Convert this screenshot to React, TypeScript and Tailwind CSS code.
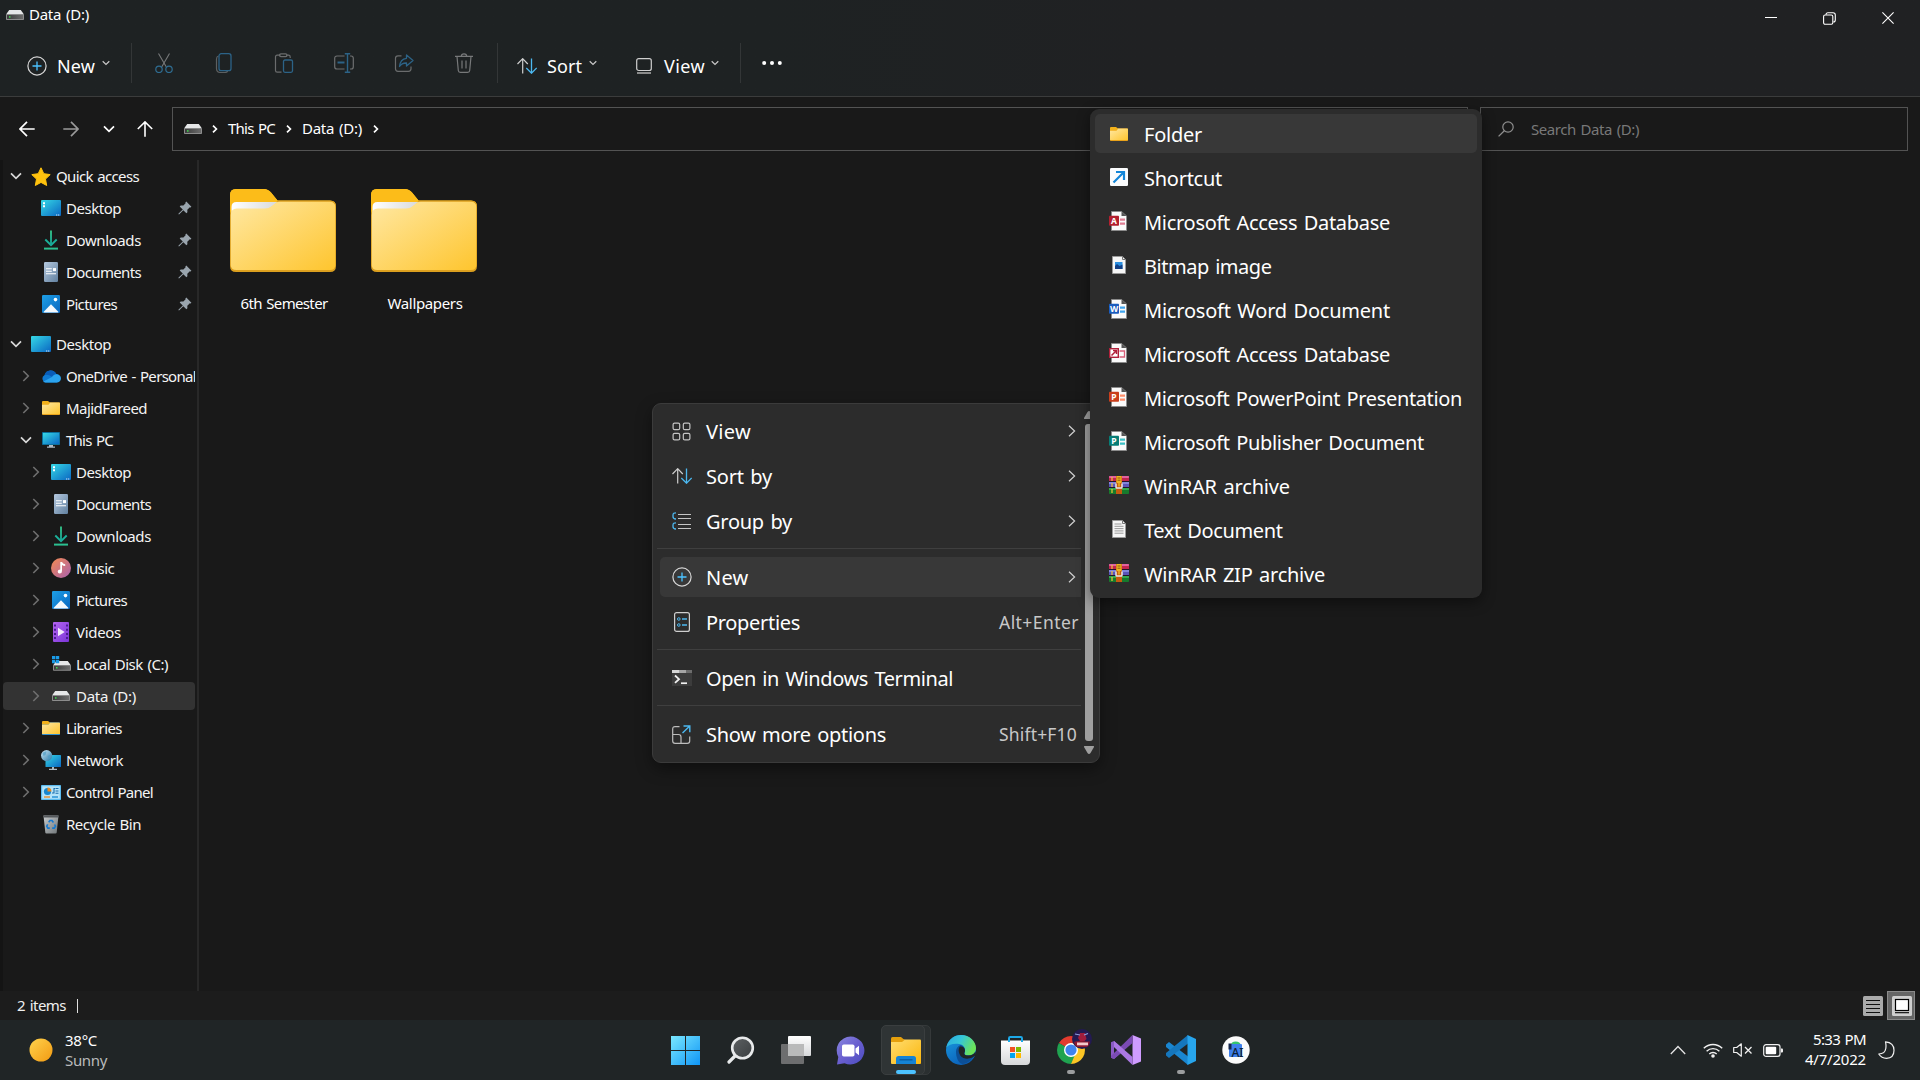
import { useLayoutEffect, useRef, useState, type ReactNode } from 'react';

/* Text whose tracking is tuned so that it spans the given width. */
function Label({ children, w, className = '' }: { children: string; w: number; className?: string }) {
  const ref = useRef<HTMLSpanElement>(null);
  const [track, setTrack] = useState(0);
  useLayoutEffect(() => {
    if (ref.current) {
      const natural = ref.current.getBoundingClientRect().width - track * children.length;
      setTrack((w - natural) / children.length);
    }
  }, [children, w]);
  return (
    <span ref={ref} className={`inline-block whitespace-pre [word-spacing:0.08em] ${className}`} style={{ letterSpacing: `${track}px` }}>
      {children}
    </span>
  );
}

type IconProps = { w?: number; h?: number; vb?: string; className?: string; children: ReactNode };
function Svg({ w = 20, h = 20, vb, className = '', children }: IconProps) {
  return (
    <svg width={w} height={h} viewBox={vb ?? `0 0 ${w} ${h}`} fill="none" className={`block shrink-0 ${className}`}>
      {children}
    </svg>
  );
}

function Gradients() {
  return (
    <svg width="0" height="0" className="absolute">
      <defs>
        <linearGradient id="desk" x1="0" y1="0" x2="1" y2="1"><stop offset="0" stopColor="#36d9e6" /><stop offset="1" stopColor="#0a66c2" /></linearGradient>
        <linearGradient id="pic" x1="0" y1="0" x2="1" y2="1"><stop offset="0" stopColor="#1ea0e6" /><stop offset="1" stopColor="#0866c0" /></linearGradient>
        <linearGradient id="doc" x1="0" y1="0" x2="1" y2="1"><stop offset="0" stopColor="#b4c8de" /><stop offset="1" stopColor="#61809f" /></linearGradient>
        <linearGradient id="dl" x1="0" y1="0" x2="0" y2="1"><stop offset="0" stopColor="#36c98a" /><stop offset="1" stopColor="#14a79c" /></linearGradient>
        <linearGradient id="music" x1="0" y1="0" x2="1" y2="1"><stop offset="0" stopColor="#f58b50" /><stop offset="1" stopColor="#a860b0" /></linearGradient>
        <linearGradient id="video" x1="0" y1="0" x2="1" y2="1"><stop offset="0" stopColor="#b565f0" /><stop offset="1" stopColor="#7a34d8" /></linearGradient>
        <linearGradient id="fold" x1="0" y1="0" x2="1" y2="1"><stop offset="0" stopColor="#ffe8a3" /><stop offset="1" stopColor="#fec52e" /></linearGradient>
        <linearGradient id="foldTask" x1="0" y1="0" x2="1" y2="1"><stop offset="0" stopColor="#ffdd70" /><stop offset="1" stopColor="#fbb60c" /></linearGradient>
        <linearGradient id="paper" x1="0" y1="0" x2="1" y2="0"><stop offset="0" stopColor="#ffffff" /><stop offset="1" stopColor="#d9dadb" /></linearGradient>
        <linearGradient id="drive" x1="0" y1="0" x2="1" y2="0"><stop offset="0" stopColor="#3c3c3c" /><stop offset="1" stopColor="#6c6c6c" /></linearGradient>
        <linearGradient id="win" gradientUnits="userSpaceOnUse" x1="0" y1="0" x2="29" y2="29"><stop offset="0" stopColor="#7ae8ff" /><stop offset="1" stopColor="#0f95f5" /></linearGradient>
        <linearGradient id="chat" x1="0" y1="0" x2="1" y2="1"><stop offset="0" stopColor="#8a88e0" /><stop offset="0.5" stopColor="#6a5fcf" /><stop offset="1" stopColor="#4a4cc0" /></linearGradient>
        <linearGradient id="edgeTop" x1="0" y1="0" x2="1" y2="0.4"><stop offset="0" stopColor="#2aa7e0" /><stop offset="0.5" stopColor="#35c6d8" /><stop offset="1" stopColor="#6be35a" /></linearGradient>
        <linearGradient id="edgeSide" x1="0" y1="0" x2="0.6" y2="1"><stop offset="0" stopColor="#1a9be0" /><stop offset="1" stopColor="#0a5fb8" /></linearGradient>
        <linearGradient id="globe" x1="0" y1="0" x2="1" y2="1"><stop offset="0" stopColor="#d4ecf7" /><stop offset="1" stopColor="#2577a8" /></linearGradient>
        <linearGradient id="sun" x1="0" y1="0" x2="1" y2="1"><stop offset="0" stopColor="#ffd34d" /><stop offset="1" stopColor="#f29a12" /></linearGradient>
        <linearGradient id="store" x1="0" y1="0" x2="0" y2="1"><stop offset="0" stopColor="#ffffff" /><stop offset="1" stopColor="#d6d8da" /></linearGradient>
        <linearGradient id="bin" x1="0" y1="0" x2="1" y2="1"><stop offset="0" stopColor="#c9ccce" /><stop offset="1" stopColor="#6f7578" /></linearGradient>
        <linearGradient id="lens" x1="0" y1="0" x2="1" y2="1"><stop offset="0" stopColor="#5d6163" /><stop offset="1" stopColor="#3a3e40" /></linearGradient>
      </defs>
    </svg>
  );
}

/* ---------- small icons ---------- */
const Drive = () => (
  <Svg w={18} h={10}>
    <path d="M3.2 0h11.6L18 4.5H0z" fill="#e6e7e8" />
    <rect y="4.3" width="18" height="5.7" rx="0.8" fill="#8d8d8d" />
    <rect x="1" y="5" width="16" height="4" fill="url(#drive)" />
    <rect x="3" y="6.2" width="1.5" height="1.5" fill="#3ddc4e" />
  </Svg>
);
const LocalDisk = () => (
  <Svg w={19} h={16}>
    <path d="M4.2 5h11.6L19 9.5H1z" fill="#e6e7e8" />
    <rect x="1" y="9" width="18" height="5.7" rx="0.8" fill="#8d8d8d" />
    <rect x="2" y="9.8" width="16" height="4" fill="url(#drive)" />
    <rect x="4" y="11" width="1.5" height="1.5" fill="#3ddc4e" />
    <path d="M0 0h3.300v3.300H0zM3.900 0h3.300v3.300H3.900zM0 3.900h3.300v3.300H0zM3.900 3.900h3.300v3.300H3.900z" fill="#1a9be8" />
  </Svg>
);
const Desk = () => (
  <Svg w={20} h={16}>
    <rect width="20" height="16" rx="1" fill="url(#desk)" />
    <path d="M2 2.200h2v2H2zM2 5.200h2v2H2z" fill="#fff" />
    <path d="M15 14.500h1.300v1H15zM17 14.500h1.300v1H17z" fill="#fff" opacity=".8" />
  </Svg>
);
const DeskPlain = () => (
  <Svg w={20} h={16}>
    <rect width="20" height="16" rx="1" fill="url(#desk)" />
    <path d="M15 14.500h1.300v1H15zM17 14.500h1.300v1H17z" fill="#fff" opacity=".8" />
  </Svg>
);
const Download = () => (
  <Svg w={14} h={20}>
    <path d="M1.300 9.500 7 15.200l5.700-5.700" stroke="#1bb09a" strokeWidth="1.900" />
    <rect x="6.100" y="0.500" width="1.800" height="14.500" fill="url(#dl)" />
    <rect x="0" y="17.600" width="14" height="2" fill="#2bbf90" />
  </Svg>
);
const Doc = () => (
  <Svg w={14} h={20}>
    <rect width="14" height="20" rx="1.200" fill="url(#doc)" />
    <path d="M2 6.700h5.800M2 9.200h5.800M2 11.700h10" stroke="#fff" strokeWidth="1.100" />
    <rect x="9" y="6.100" width="3" height="3" fill="#fff" />
  </Svg>
);
const Picture = () => (
  <Svg w={18} h={18}>
    <rect width="18" height="18" rx="1.300" fill="url(#pic)" />
    <path d="M1.500 17 9 9.300l7.500 7.700q-.5.600-1.200.600H2.700q-.7 0-1.200-.6z" fill="#f4f9fd" />
    <circle cx="13.500" cy="4.600" r="1.800" fill="#fff" />
  </Svg>
);
const Star = () => (
  <Svg w={20} h={19}>
    <path d="M10 .8 12.800 6.700l6.400.9-4.700 4.500 1.200 6.400L10 15.400l-5.700 3.100 1.200-6.400L.8 7.600l6.400-.9z" fill="#ffc20e" stroke="#ffc20e" strokeLinejoin="round" />
  </Svg>
);
const OneDrive = () => (
  <Svg w={20} h={13}>
    <path d="M4.500 12.500a4 4 0 0 1-.9-7.500A6.300 6.300 0 0 1 15.300 4a4.400 4.400 0 0 1 .7 8.500z" fill="#0f7ad2" />
    <path d="M3.600 5A6.300 6.300 0 0 1 15.300 4q-2.500 0-4.500 2.800Q7.500 4.200 3.600 5z" fill="#0a5cb8" />
    <path d="M2 11.700 11 6.900q2-3 4.800-2.700a4.200 4.200 0 0 1 3.600 6.200q-1.100 2.100-3.400 2.100H4.500Q3 12.500 2 11.700z" fill="#2ba3ee" />
  </Svg>
);
const SmallFolder = ({ base = '#e9a21a' }: { base?: string }) => (
  <Svg w={18} h={14}>
    <rect y="1.500" width="18" height="12.500" rx=".8" fill={base} />
    <path d="M0 3.500h6.500L8 1.500h9.300q.7 0 .7.700V12.500q0 .5-.5.500H.5q-.5 0-.5-.5z" fill="url(#fold)" />
    <path d="M0 3.500V1q0-1 1-1h5l2 1.600-1.500 2z" fill="#f3b11a" />
  </Svg>
);
const Pc = () => (
  <Svg w={18} h={16}>
    <rect width="18" height="13" rx=".8" fill="#0b6f9c" />
    <rect x="1" y="1" width="16" height="11" fill="url(#desk)" />
    <path d="M7 13h4v1.500H7zM5 14.500h8v1.200H5z" fill="#aeb9c2" />
  </Svg>
);
const Music = () => (
  <Svg w={20} h={20}>
    <circle cx="10" cy="10" r="10" fill="url(#music)" />
    <path d="M9.300 4h1.700q.8 2 3.200 2.200v1.900q-2 0-3.200-1v6q0 2.500-2.200 2.500A2 2 0 0 1 6.700 13.600q0-2 2.600-2z" fill="#fff" />
  </Svg>
);
const Video = () => (
  <Svg w={16} h={20}>
    <rect width="16" height="20" rx="1" fill="url(#video)" />
    <path d="M2 2.500v15.500M14 2.500v15.500" stroke="#4c1a92" strokeWidth="2" strokeDasharray="2 2.200" />
    <path d="M5 5.700 11.700 10 5 14.300z" fill="#f3e9fc" />
  </Svg>
);
const Network = () => (
  <Svg w={20} h={20}>
    <rect x="4.500" y="5" width="15.500" height="12" rx=".6" fill="url(#desk)" />
    <path d="M11 17h2v1.700h-2zM8 18.700h8V20H8z" fill="#aeb9c2" />
    <circle cx="5.600" cy="5.600" r="5.600" fill="url(#globe)" />
    <path d="M1.500 3q2-2 4-1.500L4.500 5l-2 1zM6.500 6l3-1.500.8 2-2.500 3.200z" fill="#4e9dc4" opacity=".7" />
  </Svg>
);
const ControlPanel = () => (
  <Svg w={20} h={15}>
    <rect width="20" height="15" rx=".8" fill="#5cbcf0" />
    <rect x="1.200" y="1.200" width="17.600" height="12.600" fill="#b4e3f9" />
    <circle cx="6.500" cy="6.500" r="3.600" fill="#1687d0" />
    <path d="M6.500 6.500V2.600a4 4 0 0 1 4 3.900z" fill="#f08a1c" />
    <path d="M11 8h2V3.500h1.500M15 3.500h2.500M14.500 6h3M14.500 8.300h3" stroke="#1b6fae" strokeWidth="1.100" />
    <path d="M3 12h6" stroke="#f08a1c" strokeWidth="1.300" />
    <path d="M11 12h6" stroke="#1687d0" strokeWidth="1.300" />
  </Svg>
);
const Bin = () => (
  <Svg w={16} h={19}>
    <path d="M.5.500h15L13.700 17.500q-.1 1-1.100 1H3.400q-1 0-1.100-1z" fill="url(#bin)" />
    <path d="M.5.500h15l-.2 2H.7z" fill="#55595c" />
    <path d="m5.700 7.200 1.300-1.700h2l1.400 2M11.600 9.500l.9 1.700-1.200 1.900H9.200M6.800 13.100H4.900l-1.200-1.900 1-1.900" stroke="#1579d0" strokeWidth="1.600" />
  </Svg>
);
const Pin = () => (
  <Svg w={14} h={14}>
    <path d="M8.300.6 13.400 5.700l-.8.800-.8-.2-2.500 2.500.1 2.400-1 1L5.300 9.200 1 13.400l-.6-.3.200-.7L4.800 8.500 1.700 5.400l1-1 2.700.2L7.600 2.200 7.400 1.400z" fill="#9aa5ae" />
  </Svg>
);

const ChevD = ({ c = '#d8d8d8' }: { c?: string }) => (
  <Svg w={12} h={8}><path d="m1 1.300 5 5 5-5" stroke={c} strokeWidth="1.700" /></Svg>
);
const ChevR = ({ c = '#6f6f6f' }: { c?: string }) => (
  <Svg w={8} h={12}><path d="m1.300 1 5 5-5 5" stroke={c} strokeWidth="1.600" /></Svg>
);
const MiniDown = () => (
  <Svg w={8} h={6}><path d="M.7 1.200 4 4.400l3.300-3.200" stroke="#c9c9c9" strokeWidth="1.200" /></Svg>
);
const CrumbChev = () => (
  <Svg w={6} h={8}><path d="m1 .7 3.400 3.300L1 7.300" stroke="#fff" strokeWidth="1.700" /></Svg>
);
const PlusCircle = () => (
  <Svg w={20} h={20}>
    <circle cx="10" cy="10" r="9.100" stroke="#d6d6d6" strokeWidth="1.200" />
    <path d="M10 5.500v9M5.500 10h9" stroke="#4cc2ff" strokeWidth="1.300" />
  </Svg>
);
const SortIcon = () => (
  <Svg w={20} h={16}>
    <path d="M5.700 15.500V1M.5 6l5.200-5.300L10.800 6" stroke="#cfcfcf" strokeWidth="1.200" />
    <path d="M14.500.5V15M9.300 10l5.200 5.200L19.700 10" stroke="#4cb8f0" strokeWidth="1.300" />
  </Svg>
);

/* ---------- navigation tree ---------- */
type Node = { t: string; w: number; lv: number; icon: ReactNode; open?: boolean; leaf?: boolean; pin?: boolean; sel?: boolean; gap?: boolean };
const tree: Node[] = [
  { t: 'Quick access', w: 83, lv: 0, icon: <Star />, open: true },
  { t: 'Desktop', w: 55, lv: 1, icon: <Desk />, leaf: true, pin: true },
  { t: 'Downloads', w: 75, lv: 1, icon: <Download />, leaf: true, pin: true },
  { t: 'Documents', w: 75, lv: 1, icon: <Doc />, leaf: true, pin: true },
  { t: 'Pictures', w: 51, lv: 1, icon: <Picture />, leaf: true, pin: true },
  { t: 'Desktop', w: 55, lv: 0, icon: <DeskPlain />, open: true, gap: true },
  { t: 'OneDrive - Personal', w: 130, lv: 1, icon: <OneDrive /> },
  { t: 'MajidFareed', w: 81, lv: 1, icon: <SmallFolder /> },
  { t: 'This PC', w: 47, lv: 1, icon: <Pc />, open: true },
  { t: 'Desktop', w: 55, lv: 2, icon: <Desk /> },
  { t: 'Documents', w: 75, lv: 2, icon: <Doc /> },
  { t: 'Downloads', w: 75, lv: 2, icon: <Download /> },
  { t: 'Music', w: 38, lv: 2, icon: <Music /> },
  { t: 'Pictures', w: 51, lv: 2, icon: <Picture /> },
  { t: 'Videos', w: 45, lv: 2, icon: <Video /> },
  { t: 'Local Disk (C:)', w: 92, lv: 2, icon: <LocalDisk /> },
  { t: 'Data (D:)', w: 60, lv: 2, icon: <Drive />, sel: true },
  { t: 'Libraries', w: 56, lv: 1, icon: <SmallFolder base="#2f8fd0" /> },
  { t: 'Network', w: 57, lv: 1, icon: <Network /> },
  { t: 'Control Panel', w: 87, lv: 1, icon: <ControlPanel /> },
  { t: 'Recycle Bin', w: 75, lv: 1, icon: <Bin />, leaf: true },
];
const indent = ['pl-0', 'pl-[10px]', 'pl-[20px]'];

function Tree() {
  return (
    <nav className="flex w-[195px] shrink-0 flex-col overflow-hidden border-l-[3px] border-[#141414] text-[15px]">
      {tree.map((n, i) => (
        <div key={i} className={`flex h-8 shrink-0 items-center ${n.gap ? 'mt-2' : ''}`}>
          <div className={`flex h-7 w-[192px] items-center ${indent[n.lv]} ${n.sel ? 'rounded-sm bg-[#333333]' : ''}`}>
            <span className="flex w-[25px] shrink-0 justify-center">{n.leaf ? null : n.open ? <ChevD /> : <ChevR />}</span>
            <span className="ml-[3px] flex w-[20px] shrink-0 justify-center">{n.icon}</span>
            <Label w={n.w} className="ml-[5px] shrink-0 text-[#f4f4f4]">{n.t}</Label>
            {n.pin && <span className="mr-[3px] ml-auto"><Pin /></span>}
          </div>
        </div>
      ))}
    </nav>
  );
}

/* ---------- folders ---------- */
function Folder({ name, w }: { name: string; w: number }) {
  return (
    <div className="flex w-[141px] flex-col items-center">
      <Svg w={106} h={84}>
        <path d="M0 6q0-6 6-6h28q4 0 7 3.500l6.500 8H100q6 0 6 6V30H0z" fill="#fcbc19" />
        <path d="M6 11.500h94q6 0 6 6V77q0 6-6 6H6q-6 0-6-6V24z" fill="#dca01f" />
        <path d="M0 6q0-6 6-6h28q4 0 7 3.500l6.500 8L40 22H0z" fill="#fcbc19" />
        <path d="M1.500 24v-6q0-5 5-5h41L39 20H8z" fill="url(#paper)" />
        <path d="M.8 26q0-6.500 6-6.500h28q4 0 7-2.500l4-3.200q1.500-1 4-1h50q5.500 0 5.500 5.500V76q0 5-5.500 5H6.500Q.8 81 .8 76z" fill="url(#fold)" />
      </Svg>
      <Label w={w} className="mt-[18px] ml-[3px] text-[15px] leading-6 text-white">{name}</Label>
    </div>
  );
}

/* ---------- new-item submenu ---------- */
function OfficeIcon({ letter, c, tint }: { letter: string; c: string; tint: string }) {
  return (
    <Svg w={20} h={20} className="-mt-px">
      <path d="M2.500.5h10L17.500 5v14.500h-15z" fill="#fafafa" stroke="#8b8b8b" />
      <path d="M12.500.5V5h5z" fill="#555" />
      <path d="M11 7.500h5v2.200h-5zM11 11.500h5v2.200h-5z" fill={tint} />
      <rect x="0" y="4.800" width="10" height="10" rx=".8" fill={c} />
      <text x="5" y="12.800" textAnchor="middle" fontSize="8.500" fontWeight="700" fill="#fff" fontFamily="Noto Sans, sans-serif">{letter}</text>
    </Svg>
  );
}
const AccessTwo = () => (
  <Svg w={20} h={20} className="-mt-px">
    <path d="M2.500.5h10L17.500 5v14.500h-15z" fill="#fafafa" stroke="#8b8b8b" />
    <path d="M12.500.5V5h5z" fill="#555" />
    <path d="M10.500 8H15.500v6h-5" stroke="#d9607a" strokeWidth="1.300" />
    <rect x=".7" y="5.700" width="8.600" height="8.600" fill="#fff" stroke="#b0203a" strokeWidth="1.400" />
    <path d="M2.500 12.500 7 8M4 7.500h3.500V11" stroke="#b0203a" strokeWidth="1.500" />
  </Svg>
);
const Rar = () => (
  <Svg w={20} h={18} className="-mt-px">
    <rect width="20" height="6" rx=".8" fill="#c2254f" />
    <rect width="20" height="2" rx=".8" fill="#e062a0" />
    <rect y="6" width="20" height="6" fill="#5a55b8" />
    <rect y="6" width="20" height="2" fill="#8286dc" />
    <rect y="12" width="20" height="6" rx=".8" fill="#167a2c" />
    <rect y="12" width="20" height="2" fill="#35a84c" />
    <path d="M0 5.500h20M0 11.500h20" stroke="#22152a" />
    <path d="M3 1v4M3 7v4M3 13v4" stroke="#f3c53a" strokeWidth="1.200" />
    <rect x="7" width="6" height="18" fill="#c65a10" />
    <path d="M7.500 0h5v7h-5z" fill="#eeb422" />
    <path d="M8.500 2h3M8.500 4.200h3" stroke="#8a5a10" />
    <path d="M7 7.500v3.700q0 .8.800.8h4.400q.8 0 .8-.8V7.500" stroke="#e8e8e8" strokeWidth="1.500" />
    <path d="M10 6v4.500" stroke="#eeb422" strokeWidth="1.500" />
  </Svg>
);
const Sheet = ({ children }: { children: ReactNode }) => (
  <Svg w={14} h={18} className="-mt-px">
    <path d="M.5.5h10l3 3v14H.5z" fill="#f6f6f6" stroke="#9a9a9a" />
    <path d="M10.500.5v3h3" stroke="#777" />
    {children}
  </Svg>
);
const newItems: { t: string; w: number; icon: ReactNode }[] = [
  { t: 'Folder', w: 58, icon: <SmallFolder /> },
  {
    t: 'Shortcut', w: 78, icon: (
      <Svg w={18} h={18} className="-mt-[2px]">
        <rect width="18" height="18" rx="1.300" fill="#fbfcfd" />
        <path d="M3.500 14.500 13 5M6 4h8v8" stroke="#1486d8" strokeWidth="2.200" />
      </Svg>
    ),
  },
  { t: 'Microsoft Access Database', w: 246, icon: <OfficeIcon letter="A" c="#b3202f" tint="#dd7d92" /> },
  {
    t: 'Bitmap image', w: 127.5, icon: (
      <Sheet><rect x="3" y="6" width="7.500" height="7" fill="#2b8fe0" /><path d="M3 13V10l2-2 2.500 2 3-1.500V13z" fill="#123f86" /></Sheet>
    ),
  },
  { t: 'Microsoft Word Document', w: 246, icon: <OfficeIcon letter="W" c="#1b5cbe" tint="#41a5ee" /> },
  { t: 'Microsoft Access Database', w: 246, icon: <AccessTwo /> },
  { t: 'Microsoft PowerPoint Presentation', w: 318, icon: <OfficeIcon letter="P" c="#c93f1d" tint="#ff8f6b" /> },
  { t: 'Microsoft Publisher Document', w: 280, icon: <OfficeIcon letter="P" c="#077d76" tint="#3cbfc4" /> },
  { t: 'WinRAR archive', w: 146, icon: <Rar /> },
  {
    t: 'Text Document', w: 138.5, icon: (
      <Sheet><path d="M2.500 4h7M2.500 6.300h9M2.500 8.600h9M2.500 10.900h9M2.500 13.200h9" stroke="#9a9a9a" strokeWidth="1" /></Sheet>
    ),
  },
  { t: 'WinRAR ZIP archive', w: 181, icon: <Rar /> },
];

function SubMenu() {
  return (
    <div className="absolute top-[109px] left-[1090px] flex h-[489px] w-[392px] flex-col rounded-[9px] bg-[#2c2c2c] px-[5px] pt-[5px] text-[20px] text-white shadow-[0_4px_14px_rgba(0,0,0,0.45)]">
      {newItems.map((it, i) => (
        <div key={i} className={`mb-[5px] flex h-[39px] shrink-0 items-center rounded-[5px] ${i === 0 ? 'bg-[#383838]' : ''}`}>
          <span className="ml-[14px] flex w-[20px] justify-center">{it.icon}</span>
          <Label w={it.w} className="ml-[15px] pt-[2px]">{it.t}</Label>
        </div>
      ))}
    </div>
  );
}

/* ---------- context menu ---------- */
function MenuRow({ icon, t, w, arrow, keys, kw = 0, hot }: { icon: ReactNode; t: string; w: number; arrow?: boolean; keys?: string; kw?: number; hot?: boolean }) {
  return (
    <div className={`mb-[5px] ml-[7px] flex h-[40px] w-[421px] shrink-0 items-center rounded-l-[5px] ${hot ? 'bg-[#383838]' : ''}`}>
      <span className="ml-[11px] flex w-[21px] shrink-0 justify-center">{icon}</span>
      <Label w={w} className="ml-[14px] pt-[2px] text-white">{t}</Label>
      {arrow && (
        <Svg w={8} h={12} className="mr-[5px] ml-auto"><path d="m1 .7 5.600 5.300L1 11.300" stroke="#d0d0d0" strokeWidth="1.200" /></Svg>
      )}
      {keys && (
        <span className="ml-auto w-[82px]"><Label w={kw} className="text-[17.500px] text-[#c8c8c8]">{keys}</Label></span>
      )}
    </div>
  );
}
const Rule = () => <div className="mt-[2px] mb-[8px] ml-[4px] h-px w-[424px] shrink-0 bg-[#3f3f3f]" />;

function ContextMenu() {
  return (
    <div className="absolute top-[403px] left-[652px] h-[360px] w-[448px] rounded-[9px] border border-[#3b3b3b] bg-[#2c2c2c] text-[20px] shadow-[0_6px_16px_rgba(0,0,0,0.4)]">
      <div className="flex h-full">
        <div className="flex flex-col pt-[7px]">
          <MenuRow arrow t="View" w={45} icon={
            <Svg w={19} h={19}><g stroke="#c4c4c4" strokeWidth="1.200"><rect x="1.100" y="1.100" width="6.600" height="6.600" rx="1.500" /><rect x="11.300" y="1.100" width="6.600" height="6.600" rx="1.500" /><rect x="1.100" y="11.300" width="6.600" height="6.600" rx="1.500" /><rect x="11.300" y="11.300" width="6.600" height="6.600" rx="1.500" /></g></Svg>} />
          <MenuRow arrow t="Sort by" w={66} icon={<SortIcon />} />
          <MenuRow arrow t="Group by" w={86} icon={
            <Svg w={19} h={18}><path d="M6 2.500h13M6 6.500h13M6 12.500h13M6 16.500h13" stroke="#c4c4c4" strokeWidth="1.200" /><path d="M4 .8Q1 .8 1 3v1.500Q1 7 4 7M4 10.800q-3 0-3 2.200v1.500Q1 17 4 17" stroke="#4cb8f0" strokeWidth="1.300" /></Svg>} />
          <Rule />
          <MenuRow arrow hot t="New" w={42.5} icon={<PlusCircle />} />
          <MenuRow t="Properties" w={94} keys="Alt+Enter" kw={80} icon={
            <Svg w={16} h={20}><rect x=".6" y=".6" width="14.800" height="18.800" rx="2" stroke="#cfcfcf" strokeWidth="1.200" /><circle cx="4.800" cy="7" r="1.300" stroke="#4cb8f0" /><circle cx="4.800" cy="13" r="1.300" stroke="#4cb8f0" /><path d="M8 7h5M8 13h5" stroke="#4cb8f0" strokeWidth="1.300" /></Svg>} />
          <Rule />
          <MenuRow t="Open in Windows Terminal" w={247} icon={
            <Svg w={20} h={16}><rect width="20" height="16" fill="#3c3c3c" /><path d="M0 0h7v3H0z" fill="#d6d6d6" /><path d="M7 0h7v3H7z" fill="#a6a6a6" /><path d="M14 0h6v3h-6z" fill="#6d6d6d" /><path d="m3 5.500 4 3.700-4 3.700" stroke="#f0f0f0" strokeWidth="1.800" /><path d="M9 13.200h6" stroke="#f0f0f0" strokeWidth="1.700" /></Svg>} />
          <Rule />
          <MenuRow t="Show more options" w={180} keys="Shift+F10" kw={78} icon={
            <Svg w={19} h={19}><path d="M7.500 1.600H3.100Q.7 1.600.7 4v11.900q0 2.400 2.400 2.400h12.200q2.400 0 2.400-2.400v-4.400M.7 9.500h5.800q2.500 0 2.500 2.500v6.300" stroke="#bdbdbd" strokeWidth="1.200" /><path d="M10.500 8 17.500 1.200M11.500 1h6.300v6.300" stroke="#4cb8f0" strokeWidth="1.400" /></Svg>} />
        </div>
        <div className="ml-[2px] flex flex-col items-center">
          <Svg w={12} h={8} className="mt-[7px]"><path d="M6 0q.8 0 1.500 1L11 7q.3 1-.7 1H1.700Q.7 8 1 7l3.500-6Q5.200 0 6 0z" fill="#9f9f9f" /></Svg>
          <div className="mt-[5px] h-[317px] w-[8px] rounded-[3px] bg-[#9f9f9f]" />
          <Svg w={12} h={8} className="mt-[5px]"><path d="M6 8q-.8 0-1.500-1L1 1Q.7 0 1.700 0h8.600q1 0 .7 1L7.500 7Q6.800 8 6 8z" fill="#9f9f9f" /></Svg>
        </div>
      </div>
    </div>
  );
}

/* ---------- command bar ---------- */
const Gray = '#5d6061';
function CommandBar() {
  return (
    <div className="flex h-[67px] items-start">
      <div className="flex h-[67px] w-[131px] items-center pt-[6px] pl-[27px]">
        <PlusCircle />
        <Label w={38} className="mt-[2px] ml-[10px] text-[18px] text-white">New</Label>
        <span className="mb-[5px] ml-[7px]"><MiniDown /></span>
      </div>
      <div className="mt-[14px] h-[40px] w-px bg-[#333637]" />
      <div className="flex h-[67px] w-[365px] items-center gap-[40px] pt-px pl-[22px]">
        <Svg w={20} h={20}><path d="m4.500.5 7.700 13.200M15.500.5 7.800 13.700" stroke="#77797a" strokeWidth="1.100" /><circle cx="5" cy="16.300" r="3.200" stroke="#2f6d92" strokeWidth="1.200" /><circle cx="15" cy="16.300" r="3.200" stroke="#2f6d92" strokeWidth="1.200" /></Svg>
        <Svg w={20} h={20}><path d="M4.500 3Q2.500 3.500 2.500 6v9.500q0 4 4 4H11q2 0 2.700-1.500" stroke={Gray} strokeWidth="1.200" /><rect x="5" y=".7" width="12" height="17" rx="2.200" stroke="#2c6387" strokeWidth="1.300" /></Svg>
        <Svg w={20} h={20}><path d="M6.500 2.200H3.200q-1.700 0-1.700 1.700V17.500q0 1.700 1.700 1.700H7.500M12 2.200h2.500q1.700 0 1.700 1.700V5" stroke="#6a6c6d" strokeWidth="1.200" /><rect x="5.500" y=".8" width="7.500" height="2.800" rx="1.400" stroke="#6a6c6d" strokeWidth="1.200" /><rect x="9.500" y="7" width="9" height="12.300" rx="1.500" stroke="#2c6387" strokeWidth="1.300" /></Svg>
        <Svg w={20} h={20}><path d="M10.500 3H3Q.7 3 .7 5.300v8.400Q.7 16 3 16h7.500M16 3h1.200q2.100 0 2.100 2.300v8.400q0 2.300-2.100 2.300H16" stroke="#6d6f70" strokeWidth="1.200" /><path d="M3.500 9.500h7" stroke="#2c6387" strokeWidth="2" /><path d="M13.500.8v18M10.800.7h5.400M10.800 19.200h5.400" stroke="#2c6387" strokeWidth="1.400" /></Svg>
        <Svg w={20} h={20}><path d="M7.500 2.800H4Q1.500 2.800 1.500 5.300v10.500q0 2.500 2.500 2.500h10.500q2.500 0 2.500-2.500V13.500" stroke="#6a6c6d" strokeWidth="1.200" /><path d="M12.500 2 19 7.500 12.500 13V10q-4.500-.3-7 3.500.7-7.500 7-8.200z" stroke="#2c6387" strokeWidth="1.300" strokeLinejoin="round" /></Svg>
        <Svg w={20} h={20}><path d="M1 3.300h18M7.300 3.300Q7.300.8 10 .8t2.700 2.500M3 3.500l1.300 14q.2 1.800 2 1.800h7.400q1.800 0 2-1.800l1.300-14M8 7.500v8M12 7.500v8" stroke="#77797a" strokeWidth="1.200" /></Svg>
      </div>
      <div className="mt-[14px] h-[40px] w-px bg-[#333637]" />
      <div className="flex h-[67px] w-[242px] items-center pt-[6px] pl-[19px]">
        <SortIcon />
        <Label w={35} className="mt-[2px] ml-[10px] text-[18px] text-white">Sort</Label>
        <span className="mb-[5px] ml-[7px]"><MiniDown /></span>
        <Svg w={16} h={16} className="ml-[39px]"><rect x=".7" y=".7" width="14.600" height="11.800" rx="2" stroke="#cfcfcf" strokeWidth="1.200" /><path d="M1 15h14" stroke="#b9b9b9" strokeWidth="1.400" /></Svg>
        <Label w={41} className="mt-[2px] ml-[12px] text-[18px] text-white">View</Label>
        <span className="mb-[5px] ml-[6px]"><MiniDown /></span>
      </div>
      <div className="mt-[14px] h-[40px] w-px bg-[#333637]" />
      <Svg w={20} h={4} className="mt-[32px] ml-[21px]"><circle cx="2.200" cy="2" r="2" fill="#fff" /><circle cx="10" cy="2" r="2" fill="#fff" /><circle cx="17.800" cy="2" r="2" fill="#fff" /></Svg>
    </div>
  );
}

function AddressRow() {
  return (
    <div className="flex h-[63px] shrink-0 pt-[10px] text-[15px]">
      <div className="flex h-[44px] w-[172px] items-center pl-[19px]">
        <Svg w={16} h={16}><path d="M15.700 8H1M8 .8.900 8 8 15.200" stroke="#fff" strokeWidth="1.700" /></Svg>
        <Svg w={16} h={16} className="ml-[28px]"><path d="M.3 8H15M8 .8 15.100 8 8 15.200" stroke="#9a9a9a" strokeWidth="1.700" /></Svg>
        <span className="ml-[24px]"><ChevD c="#fff" /></span>
        <Svg w={16} h={16} className="ml-[22px]"><path d="M8 15.800V1M.8 8 8 .9 15.200 8" stroke="#fff" strokeWidth="1.600" /></Svg>
      </div>
      <div className="flex h-[44px] w-[1296px] items-center border border-[#535353] pl-[11px] text-white">
        <Drive />
        <span className="ml-[10px]"><CrumbChev /></span>
        <Label w={47} className="mb-[2px] ml-[10px]">This PC</Label>
        <span className="ml-[11px]"><CrumbChev /></span>
        <Label w={60} className="mb-[2px] ml-[10px]">Data (D:)</Label>
        <span className="ml-[11px]"><CrumbChev /></span>
      </div>
      <div className="ml-[12px] flex h-[44px] w-[428px] items-center border border-[#535353] pl-[17px]">
        <Svg w={16} h={16}><circle cx="10" cy="6" r="5.200" stroke="#8f8f8f" strokeWidth="1.200" /><path d="M6.300 9.700.6 15.400" stroke="#8f8f8f" strokeWidth="1.300" /></Svg>
        <Label w={108} className="ml-[17px] text-[#787878]">Search Data (D:)</Label>
      </div>
    </div>
  );
}

/* ---------- taskbar ---------- */
function TaskIcon({ children, run }: { children: ReactNode; run?: boolean }) {
  return (
    <div className="relative flex h-[60px] w-[55px] items-center justify-center">
      {children}
      {run && <span className="absolute bottom-[6px] left-[24px] h-[4px] w-[8px] rounded-full bg-[#9b9e9f]" />}
    </div>
  );
}
function Taskbar() {
  return (
    <footer className="flex h-[60px] shrink-0 items-center bg-[#202526] text-[15px] text-white">
      <div className="flex w-[658px] items-center pl-[29px]">
        <Svg w={24} h={24}><circle cx="12" cy="12" r="11.500" fill="url(#sun)" /></Svg>
        <div className="mb-px ml-[12px] flex flex-col items-start leading-5">
          <Label w={32}>38°C</Label>
          <Label w={42} className="text-[#b9bbbc]">Sunny</Label>
        </div>
      </div>
      <div className="flex">
        <TaskIcon><Svg w={29} h={29}><path d="M0 0h14v14H0zM15 0h14v14H15zM0 15h14v14H0zM15 15h14v14H15z" fill="url(#win)" /></Svg></TaskIcon>
        <TaskIcon><Svg w={28} h={28}><path d="M8.500 19.500 2 26" stroke="#e8eaeb" strokeWidth="3.200" strokeLinecap="round" /><circle cx="15.500" cy="12" r="10.300" fill="url(#lens)" stroke="#e8eaeb" strokeWidth="2.600" /></Svg></TaskIcon>
        <TaskIcon><Svg w={30} h={28}><rect x="7" width="23" height="20" rx="1" fill="url(#store)" /><rect y="8" width="23" height="20" rx="1" fill="#6d6e6f" /><path d="M7 8h16v12H7z" fill="#b9baba" /></Svg></TaskIcon>
        <TaskIcon><Svg w={29} h={29}><path d="M14.500.5a14 14 0 1 1-6 26.700L1 28.500 2.300 21A14 14 0 0 1 14.500.5z" fill="url(#chat)" /><rect x="6" y="8.500" width="12.500" height="12" rx="1.800" fill="#fff" /><path d="m19.500 12.500 3.500-2.800v9.600l-3.500-2.800z" fill="#fff" /></Svg></TaskIcon>
        <div className="relative flex h-[60px] w-[55px] items-center justify-center">
          <span className="absolute top-[5px] left-[6px] h-[50px] w-[47px] rounded-[5px] border border-[#35393a] bg-[#2a2f30]" />
          <span className="absolute top-[5px] left-[3px] h-[50px] w-[44px] rounded-[5px] border border-[#3a3e3f] bg-[#2f3435]" />
          <Svg w={30} h={27} className="relative">
            <rect y="2.500" width="30" height="24.500" rx="1" fill="url(#foldTask)" /><path d="M0 5V1.500Q0 0 1.500 0H10l3.500 3L11 5z" fill="#e5a00d" />
            <path d="M5 27v-5.500q0-2.500 2.500-2.500h15q2.500 0 2.500 2.500V27z" fill="#1583d4" /><path d="M8.500 22.800h13" stroke="#0b5a9e" strokeWidth="1.300" />
          </Svg>
          <span className="absolute bottom-[6px] left-[18px] h-[4px] w-[20px] rounded-full bg-[#4cc2ff]" />
        </div>
        <TaskIcon>
          <Svg w={30} h={30}>
            <circle cx="15" cy="15" r="15" fill="url(#edgeSide)" />
            <path d="M.3 12.500C2 4.500 8.500 0 15 0c8.500 0 15 6.300 15 13 0 5-3.700 7.500-7.500 7.500-3.300 0-4.700-1.300-4-2.600 1.300-2.300.9-7.900-5.300-8.900C7.500 8 2.500 9.800.3 12.500z" fill="url(#edgeTop)" />
            <path d="M10 16.500c0-3 2-5.500 4.500-6.500 4.500 1 5.200 6 4 8-.7 1.300.7 2.600 4 2.600 2.500 0 4-.6 5.700-1.800C26.500 25 21 29 16.500 29 12 28 10 22 10 16.500z" fill="#0c4f96" />
            <path d="M14 11.500c2.600-.5 5 1.200 5 4 0 1.200-.7 2-.8 2.700-.1 1.400 1.600 2.400 4.300 2.400 3.200 0 5.600-1.200 7-4L30 20l-3.500 2.500q-5 2-9 .5c-5-2.200-6-9-3.500-11.500z" fill="#202526" />
          </Svg>
        </TaskIcon>
        <TaskIcon>
          <Svg w={29} h={29}><path d="M0 4.500h29V25q0 4-4 4H4q-4 0-4-4z" fill="url(#store)" /><path d="M8 6V2.200Q8 1 9.200 1h10.600Q21 1 21 2.200V6" stroke="#1ca9e8" strokeWidth="2" /><path d="M9 11h5v5H9z" fill="#f25022" /><path d="M15 11h5v5h-5z" fill="#7fba00" /><path d="M9 17h5v5H9z" fill="#00a4ef" /><path d="M15 17h5v5h-5z" fill="#ffb900" /></Svg>
        </TaskIcon>
        <TaskIcon run>
          <Svg w={28} h={28}><path d="M14 14 1.900 7A14 14 0 0 1 26.100 7z" fill="#e33b2e" /><path d="M14 14 1.900 7A14 14 0 0 0 14 28l6-10.500z" fill="#1fa350" /><path d="M14 14h6L14 28A14 14 0 0 0 26.100 7H14z" fill="#fcc624" /><circle cx="14" cy="14" r="7" fill="#fff" /><circle cx="14" cy="14" r="5.600" fill="#3f83ee" /></Svg>
          <Svg w={20} h={20} className="absolute top-[9px] right-[6px]"><circle cx="10" cy="10" r="10" fill="#231a52" /><path d="M8 4h5l1.500 6-2 2H8l-2-3z" fill="#a01c3c" /><path d="M3 5l5 1M12 6l4-1.500" stroke="#8fa0e0" strokeWidth="1.200" /><path d="M2 13q3-1.500 8-1t8 .5q-.5 4-3 5.500H5Q2.500 16 2 13z" fill="#8c1830" /><rect x="5" y="13.500" width="11" height="2.800" fill="#f2c9cd" /></Svg>
        </TaskIcon>
        <TaskIcon>
          <Svg w={30} h={30}><path d="m21.500 0 8.500 3.500V26.500L21.500 30z" fill="#cf9cff" /><path d="M0 7.300 3 6l7 6v6l-7 6-3-1.300z" fill="#8a5bc4" /><path d="M3 11.500v7L7 15z" fill="#202526" /><path d="M21.500 0v8L3 24l-3-1.300V21z" fill="#7b4bb4" /><path d="M3 6 21.500 22v8L3 12z" fill="#ab78e4" /></Svg>
        </TaskIcon>
        <TaskIcon run>
          <Svg w={30} h={30}><path d="M0 9.500 3 7l19 14.500V30L0 12z" fill="#1a86d0" /><path d="M0 20.500 3 23 22 8.500V0L0 18z" fill="#1577bd" /><path d="m21.500 0 8.500 4V26l-8.500 4z" fill="#27a5ec" /></Svg>
        </TaskIcon>
        <TaskIcon>
          <Svg w={28} h={28}><circle cx="14" cy="14" r="13.700" fill="#fbfbfb" /><path d="M9 9q0-3.500 4.700-3.500T18.500 9z" fill="#35c46e" /><rect x="7" y="8" width="13" height="13" rx="1" fill="#3e80ec" /><path d="M6.500 7.500h3v6h-3z" fill="#13254a" /><text x="15.500" y="20.800" textAnchor="middle" fontSize="12" fontWeight="500" fill="#0d2038" fontFamily="Noto Sans, sans-serif">AI</text></Svg>
        </TaskIcon>
      </div>
      <div className="ml-auto flex items-center pr-[25px]">
        <Svg w={16} h={10}><path d="m.8 9 7.200-7.500L15.200 9" stroke="#e4e4e4" strokeWidth="1.300" /></Svg>
        <Svg w={20} h={16} className="ml-[17px]"><path d="M.8 6.200a13.300 13.300 0 0 1 18.400 0M3.600 9.200a9.200 9.200 0 0 1 12.800 0M6.300 12a5.300 5.300 0 0 1 7.400 0" stroke="#f0f0f0" strokeWidth="1.400" /><circle cx="10" cy="14" r="1.800" fill="#f0f0f0" /></Svg>
        <Svg w={20} h={14} className="ml-[10px]"><path d="M.7 4.500h3L8.300.8v12.400L3.700 9.500h-3z" stroke="#f0f0f0" strokeWidth="1.200" strokeLinejoin="round" /><path d="m12 4 6.500 6.500M18.500 4 12 10.500" stroke="#f0f0f0" strokeWidth="1.300" /></Svg>
        <Svg w={20} h={13} className="ml-[10px]"><rect x=".7" y=".7" width="16.300" height="11.600" rx="2.400" stroke="#f0f0f0" strokeWidth="1.200" /><rect x="2.700" y="2.700" width="10.500" height="7.600" rx="1" fill="#fff" /><path d="M18 4.500h1q1 0 1 1v2q0 1-1 1h-1z" fill="#f0f0f0" /></Svg>
        <div className="mb-[2px] ml-[20px] flex w-[63px] flex-col items-end leading-5">
          <Label w={53}>5:33 PM</Label>
          <Label w={61}>4/7/2022</Label>
        </div>
        <Svg w={17} h={18} className="ml-[12px]"><path d="M7.500.8q8.500.7 8.500 8.500 0 7.900-7.500 8-5 0-7.700-4.300 6.200-.2 7-5.500Q8.300 4 7.500.8z" stroke="#f0f0f0" strokeWidth="1.200" strokeLinejoin="round" /></Svg>
      </div>
    </footer>
  );
}

export default function App() {
  return (
    <div className="relative flex h-[1080px] w-[1920px] flex-col overflow-hidden bg-[#191919] font-['Noto_Sans','Open_Sans',sans-serif]">
      <Gradients />
      <header className="h-[97px] shrink-0 border-b border-[#3b3c3c] bg-linear-to-r from-[#1e2223] from-40% to-[#202123] to-60%">
        <div className="flex h-[29px] items-center pl-[6px]">
          <Drive />
          <Label w={60} className="ml-[5px] text-[15px] text-white">Data (D:)</Label>
          <div className="ml-auto flex items-center pt-[7px] pr-[26px]">
            <Svg w={12} h={12}><path d="M0 5.500h12" stroke="#fff" /></Svg>
            <Svg w={13} h={13} className="ml-[46px]"><rect x=".6" y="3" width="9.200" height="9.200" rx="1.500" stroke="#fff" strokeWidth="1.100" /><path d="M3 2.700Q3 .7 5 .7h5Q12.300.7 12.300 3v5q0 2-2 2" stroke="#fff" strokeWidth="1.100" /></Svg>
            <Svg w={12} h={12} className="ml-[46px]"><path d="m.4.4 11.200 11.200M11.600.4.400 11.600" stroke="#fff" strokeWidth="1.100" /></Svg>
          </div>
        </div>
        <CommandBar />
      </header>
      <AddressRow />
      <main className="flex min-h-0 flex-1">
        <Tree />
        <div className="ml-[2px] w-[2px] bg-[#282828]" />
        <div className="flex pt-[29px] pl-[13px]">
          <Folder name="6th Semester" w={87} />
          <Folder name="Wallpapers" w={75} />
        </div>
      </main>
      <div className="flex h-[29px] shrink-0 items-center bg-[#1c1c1c] text-[15px] text-[#f0f0f0]">
        <Label w={49} className="ml-[17px]">2 items</Label>
        <div className="ml-[11px] h-[14px] w-px bg-[#e0e0e0]" />
        <Svg w={20} h={20} className="ml-auto"><rect width="20" height="20" rx="1.500" fill="#aaaaaa" /><path d="M3 4.500h14M3 8.500h14M3 12.500h14M3 16.500h14" stroke="#111" strokeWidth="1.100" /></Svg>
        <div className="mr-[5px] ml-[4px] flex h-[29px] w-[28px] items-center justify-center border border-[#8a8a8a] bg-[#666666] pt-px pl-[2px]">
          <Svg w={20} h={20}><rect width="20" height="20" rx="1.500" fill="#cfcfcf" /><rect x="3.500" y="3.500" width="13" height="11" fill="#fff" stroke="#000" strokeWidth="1.200" /><path d="M3 16.700h14" stroke="#000" strokeWidth="1.100" /></Svg>
        </div>
      </div>
      <Taskbar />
      <ContextMenu />
      <SubMenu />
    </div>
  );
}
